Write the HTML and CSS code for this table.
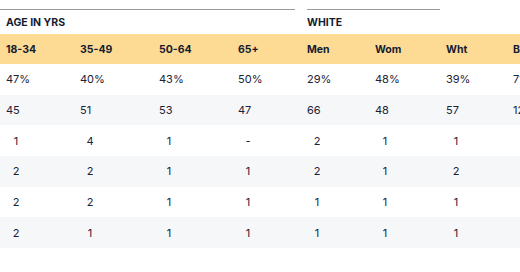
FILE: index.html
```html
<!DOCTYPE html>
<html>
<head>
	<meta charset="utf-8">
	<title>Crosstab</title>
	<link rel="stylesheet" href="styles.css">
</head>
<body>
	<div class="table">
		<div class="groups">
			<div class="group group-age">AGE IN YRS</div>
			<div class="group group-white">WHITE</div>
		</div>
		<div class="row head">
			<div class="cell">18-34</div>
			<div class="cell">35-49</div>
			<div class="cell">50-64</div>
			<div class="cell">65+</div>
			<div class="cell">Men</div>
			<div class="cell">Wom</div>
			<div class="cell">Wht</div>
			<div class="cell">Blk</div>
		</div>
		<div class="row">
			<div class="cell">47%</div>
			<div class="cell">40%</div>
			<div class="cell">43%</div>
			<div class="cell">50%</div>
			<div class="cell">29%</div>
			<div class="cell">48%</div>
			<div class="cell">39%</div>
			<div class="cell">71%</div>
		</div>
		<div class="row alt">
			<div class="cell">45</div>
			<div class="cell">51</div>
			<div class="cell">53</div>
			<div class="cell">47</div>
			<div class="cell">66</div>
			<div class="cell">48</div>
			<div class="cell">57</div>
			<div class="cell">12</div>
		</div>
		<div class="row count">
			<div class="cell"><span>1</span></div>
			<div class="cell"><span>4</span></div>
			<div class="cell"><span>1</span></div>
			<div class="cell"><span>-</span></div>
			<div class="cell"><span>2</span></div>
			<div class="cell"><span>1</span></div>
			<div class="cell"><span>1</span></div>
			<div class="cell"><span>2</span></div>
		</div>
		<div class="row count alt">
			<div class="cell"><span>2</span></div>
			<div class="cell"><span>2</span></div>
			<div class="cell"><span>1</span></div>
			<div class="cell"><span>1</span></div>
			<div class="cell"><span>2</span></div>
			<div class="cell"><span>1</span></div>
			<div class="cell"><span>2</span></div>
			<div class="cell"><span>2</span></div>
		</div>
		<div class="row count">
			<div class="cell"><span>2</span></div>
			<div class="cell"><span>2</span></div>
			<div class="cell"><span>1</span></div>
			<div class="cell"><span>1</span></div>
			<div class="cell"><span>1</span></div>
			<div class="cell"><span>1</span></div>
			<div class="cell"><span>1</span></div>
			<div class="cell"><span>2</span></div>
		</div>
		<div class="row count alt">
			<div class="cell"><span>2</span></div>
			<div class="cell"><span>1</span></div>
			<div class="cell"><span>1</span></div>
			<div class="cell"><span>1</span></div>
			<div class="cell"><span>1</span></div>
			<div class="cell"><span>1</span></div>
			<div class="cell"><span>1</span></div>
			<div class="cell"><span>1</span></div>
		</div>
	</div>
</body>
</html>
```

FILE: styles.css
```css
*{
	padding: 0;
	margin: 0;
	box-sizing: border-box;
}
html, body{
	background: #ffffff;
	overflow: hidden;
}
body{
	width: 520px;
	height: 272px;
	font-family: "Inter", "Liberation Sans", sans-serif;
	color: #1b2235;
}
.table{
	width: 600px;
	padding-top: 9px;
}
.groups{
	display: flex;
	height: 25px;
}
.group{
	border-top: 1px solid #9a9a9a;
	font-size: 10.5px;
	font-weight: 700;
	color: #141c30;
	padding: 6px 0 0 6px;
	letter-spacing: 0;
}
.group-age{
	width: 295px;
}
.group-white{
	width: 133px;
	margin-left: 12px;
	padding-left: 0;
}
.row{
	display: grid;
	grid-template-columns: 74px 79px 79px 69px 68px 71px 67px 93px;
	height: 30.67px;
	align-items: center;
	font-size: 11px;
}
.row.head{
	height: 30px;
	background: #fedb94;
	font-weight: 700;
	font-size: 10.5px;
	color: #141c30;
}
.row.alt{
	background: #f6f7f9;
}
.cell{
	padding-left: 6px;
	white-space: nowrap;
}
.count .cell span{
	display: inline-block;
	width: 20px;
	text-align: center;
}
```
